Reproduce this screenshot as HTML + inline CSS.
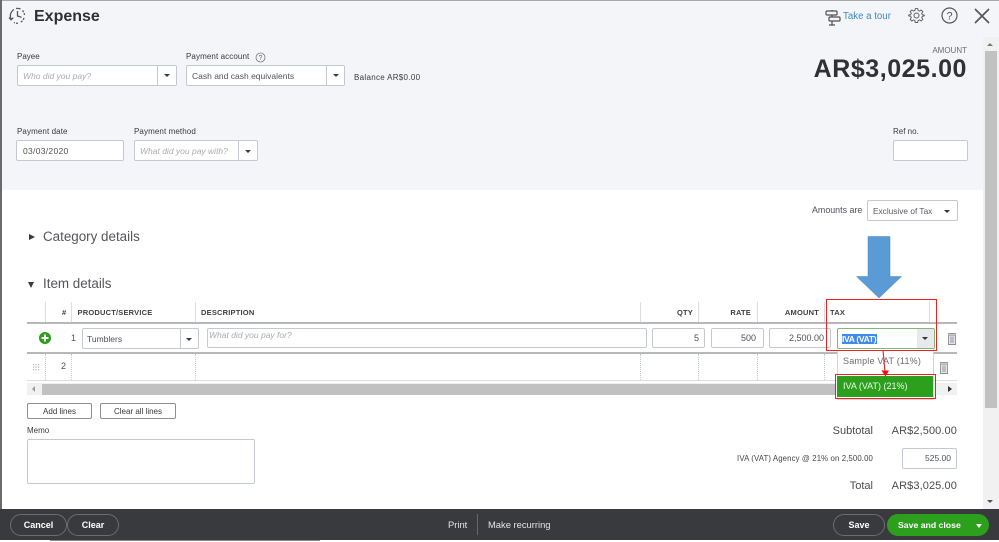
<!DOCTYPE html>
<html><head><meta charset="utf-8"><style>
html,body{margin:0;padding:0;background:#fff}
#p{position:relative;width:999px;height:542px;overflow:hidden;background:#fff;font-family:"Liberation Sans",sans-serif;color:#393a3d;filter:blur(.3px)}
#p div,#p svg{position:absolute;box-sizing:border-box}
.t{white-space:nowrap;line-height:1}
.l{font-size:8px;color:#393a3d}
.i{background:#fff;border:1px solid #c4c8d0;border-radius:2px}
.ph{font-size:8.5px;font-style:italic;color:#a9acb2}
.v{font-size:8.5px;color:#50525a}
.tri{width:0;height:0;border-left:3px solid transparent;border-right:3px solid transparent;border-top:3px solid #393a3d}
.sep{width:1px;background:#c4c8d0}
.h{font-size:7.5px;font-weight:bold;color:#3f4045;letter-spacing:.2px}
.btn{background:#fff;border:1px solid #8d9096;border-radius:2px;font-size:8px;text-align:center;color:#393a3d}
.fb{border:1px solid #6b6c72;border-radius:14px;color:#fff;font-size:9px;font-weight:bold;text-align:center;line-height:20px}
.d{width:0;border-left:1px dotted #c4c8d0}
.s{width:1px;background:#dcdde0}
</style></head><body><div id="p">
<div style="left:0;top:0;width:999px;height:190px;background:#f4f5f8"></div>
<div style="left:0;top:0;width:999px;height:1px;background:#a8a8ac"></div>
<div style="left:0;top:0;width:1.5px;height:540px;background:#6a6a6a"></div>

<svg style="left:8px;top:7px" width="19" height="18" viewBox="0 0 19 18" fill="none" stroke="#55565a" stroke-width="1.3"><path d="M3 12A7.500 7.500 0 0 1 6 2.500"/><path d="M8 1.500A7.500 7.500 0 0 1 12.500 2"/><path d="M14.500 3.500A7.500 7.500 0 0 1 16.500 8" stroke-dasharray="2 1.200"/><path d="M16 11A7.500 7.500 0 0 1 12 15.500" stroke-dasharray="2 1.200"/><path d="M10 16.200A7.500 7.500 0 0 1 6 15.500" stroke-dasharray="2 1.200"/><path d="M1 10.500l2 2.300 2.300-2"/><path d="M9.500 4v5l4 1.200"/></svg>
<div class="t" style="left:34px;top:9px;font-size:16px;font-weight:bold;color:#2f3034">Expense</div>

<div class="t l" style="left:17px;top:53px">Payee</div>
<div class="i" style="left:17px;top:65px;width:160px;height:21px"></div>
<div class="sep" style="left:157px;top:66px;height:19px"></div>
<div class="tri" style="left:164px;top:74px"></div>
<div class="t ph" style="left:23px;top:72px">Who did you pay?</div>

<div class="t l" style="left:186px;top:53px;letter-spacing:.1px">Payment account</div>
<svg style="left:255px;top:52px" width="11" height="11" viewBox="0 0 11 11" fill="none"><circle cx="5.500" cy="5.500" r="4.500" stroke="#77787c" stroke-width=".8"/><text x="5.500" y="8" font-size="7" text-anchor="middle" fill="#66676b" font-family="Liberation Sans">?</text></svg>
<div class="i" style="left:186px;top:65px;width:159px;height:21px"></div>
<div class="sep" style="left:326px;top:66px;height:19px"></div>
<div class="tri" style="left:333px;top:74px"></div>
<div class="t v" style="left:192px;top:72px">Cash and cash equivalents</div>
<div class="t l" style="left:354px;top:74px;letter-spacing:.3px">Balance AR$0.00</div>

<div class="t l" style="left:17px;top:128px;letter-spacing:.1px">Payment date</div>
<div class="i" style="left:16px;top:140px;width:108px;height:21px"></div>
<div class="t v" style="left:23px;top:147px;letter-spacing:.3px">03/03/2020</div>

<div class="t l" style="left:134px;top:128px;letter-spacing:.1px">Payment method</div>
<div class="i" style="left:134px;top:140px;width:124px;height:21px"></div>
<div class="sep" style="left:238px;top:141px;height:19px"></div>
<div class="tri" style="left:245px;top:150px"></div>
<div class="t ph" style="left:140px;top:147px">What did you pay with?</div>

<svg style="left:825px;top:9px" width="16" height="17" viewBox="0 0 16 17" fill="none" stroke="#4d4e53" stroke-width="1.200"><rect x="1" y="2" width="11" height="4" rx="1"/><rect x="4" y="8" width="11" height="4" rx="1"/><path d="M7 1v1M7 6v2M7 12v4M4 16h6"/></svg>
<div class="t" style="left:843px;top:12px;font-size:9.700px;color:#3b8ac4">Take a tour</div>
<svg style="left:908px;top:7px" width="17" height="17" viewBox="0 0 17 17" fill="none" stroke="#5b5c60" stroke-width="1"><circle cx="8.500" cy="8.500" r="2.500"/><path d="M7.200 1h2.600l.4 2.100 1.500.7 1.800-1.200 1.800 1.800-1.200 1.800.7 1.500 2.100.4v0.800l-2.100.4-.7 1.500 1.200 1.800-1.800 1.800-1.800-1.200-1.500.7-.4 2.100H7.200l-.4-2.100-1.500-.7-1.800 1.200-1.800-1.800 1.200-1.800-.7-1.500-2.100-.4V8l2.100-.4.700-1.500-1.200-1.800 1.800-1.800 1.800 1.200 1.500-.7z" transform="translate(.6 .6) scale(.93)"/></svg>
<svg style="left:941px;top:7px" width="17" height="17" viewBox="0 0 17 17" fill="none"><circle cx="8.500" cy="8.500" r="7.500" stroke="#55565a" stroke-width="1.200"/><text x="8.500" y="12.500" font-size="11" text-anchor="middle" fill="#55565a" font-family="Liberation Sans">?</text></svg>
<svg style="left:974px;top:8px" width="16" height="16" viewBox="0 0 16 16" fill="none" stroke="#55565a" stroke-width="1.700"><path d="M1 1l14 14M15 1L1 15"/></svg>

<div class="t" style="right:32px;top:47px;font-size:8px;color:#6b6c72">AMOUNT</div>
<div class="t" style="right:32px;top:57px;font-size:25px;font-weight:bold;color:#303135;letter-spacing:.55px">AR$3,025.00</div>
<div class="t l" style="left:893px;top:128px">Ref no.</div>
<div class="i" style="left:893px;top:140px;width:75px;height:21px"></div>

<div style="left:983px;top:37px;width:16px;height:472px;background:#f1f1f1"></div>
<div style="left:985px;top:51px;width:12px;height:357px;background:#c1c1c1"></div>
<div style="left:987px;top:43px;width:0;height:0;border-left:3px solid transparent;border-right:3px solid transparent;border-bottom:3px solid #777"></div>
<div style="left:987px;top:500px;width:0;height:0;border-left:3px solid transparent;border-right:3px solid transparent;border-top:3px solid #505050"></div>

<div class="t" style="left:812px;top:206px;font-size:8.900px;color:#50525a">Amounts are</div>
<div class="i" style="left:867px;top:200px;width:91px;height:21px"></div>
<div class="t" style="left:873px;top:207px;font-size:8.300px;color:#5a5b60">Exclusive of Tax</div>
<div class="tri" style="left:944px;top:210px;border-top-color:#333"></div>

<div style="left:29px;top:234px;width:0;height:0;border-top:3px solid transparent;border-bottom:3px solid transparent;border-left:6px solid #393a3d"></div>
<div class="t" style="left:43px;top:230px;font-size:13.400px;color:#55565b">Category details</div>
<div style="left:28px;top:282px;width:0;height:0;border-left:3.500px solid transparent;border-right:3.500px solid transparent;border-top:6px solid #393a3d"></div>
<div class="t" style="left:43px;top:277px;font-size:13.400px;color:#55565b">Item details</div>

<div class="s" style="left:45px;top:302px;height:20px"></div>
<div class="s" style="left:71px;top:302px;height:20px"></div>
<div class="s" style="left:195px;top:302px;height:20px"></div>
<div class="s" style="left:640px;top:302px;height:20px"></div>
<div class="s" style="left:698px;top:302px;height:20px"></div>
<div class="s" style="left:757px;top:302px;height:20px"></div>
<div class="s" style="left:824px;top:302px;height:20px"></div>
<div class="s" style="left:929px;top:302px;height:20px"></div>
<div class="d" style="left:45px;top:354px;height:26px"></div>
<div class="d" style="left:71px;top:354px;height:26px"></div>
<div class="d" style="left:195px;top:354px;height:26px"></div>
<div class="d" style="left:640px;top:354px;height:26px"></div>
<div class="d" style="left:698px;top:354px;height:26px"></div>
<div class="d" style="left:757px;top:354px;height:26px"></div>
<div class="d" style="left:824px;top:354px;height:26px"></div>

<div class="t h" style="left:62px;top:309px">#</div>
<div class="t h" style="left:77.500px;top:309px">PRODUCT/SERVICE</div>
<div class="t h" style="left:201px;top:309px">DESCRIPTION</div>
<div class="t h" style="right:306px;top:309px">QTY</div>
<div class="t h" style="right:248px;top:309px">RATE</div>
<div class="t h" style="right:180px;top:309px">AMOUNT</div>
<div class="t h" style="left:830px;top:309px">TAX</div>

<div style="left:27px;top:322px;width:930px;height:2px;background:#b5b7bb"></div>
<div style="left:27px;top:352px;width:930px;height:2px;background:#b5b7bb"></div>
<div style="left:27px;top:380px;width:930px;height:1px;background:#dcdde0"></div>

<svg style="left:38px;top:331px" width="14" height="14" viewBox="0 0 14 14"><circle cx="7" cy="7" r="6" fill="#2ca01c"/><path d="M7 3.500v7M3.500 7h7" stroke="#fff" stroke-width="2"/></svg>
<div class="t v" style="left:71px;top:334px;font-size:9px">1</div>
<div class="i" style="left:82px;top:328px;width:117px;height:21px"></div>
<div class="sep" style="left:180px;top:329px;height:19px"></div>
<div class="tri" style="left:186px;top:338px"></div>
<div class="t v" style="left:87px;top:335px">Tumblers</div>
<div class="i" style="left:207px;top:328px;width:440px;height:20px"></div>
<div class="t ph" style="left:209px;top:331px">What did you pay for?</div>
<div class="i" style="left:652px;top:328px;width:53px;height:20px"></div>
<div class="t v" style="right:300px;top:334px;font-size:9px">5</div>
<div class="i" style="left:711px;top:328px;width:53px;height:20px"></div>
<div class="t v" style="right:243px;top:334px;font-size:9px">500</div>
<div class="i" style="left:769px;top:328px;width:62px;height:20px"></div>
<div class="t v" style="right:175px;top:334px;font-size:9px">2,500.00</div>

<div class="i" style="left:837px;top:328px;width:98px;height:21px;border-color:#7dbb74"></div>
<div style="left:917px;top:329px;width:17px;height:19px;background:#e8e9ec"></div>
<div class="tri" style="left:922px;top:337px;border-top-color:#333"></div>
<div style="left:842px;top:334px;width:35px;height:10px;background:#3f8af0"></div>
<div class="t" style="left:842px;top:335px;font-size:8.500px;color:#fff;font-weight:bold;letter-spacing:-.3px">IVA (VAT)</div>

<svg style="left:947px;top:332px" width="10" height="13" viewBox="0 0 10 13" fill="none" stroke="#8a8b90" stroke-width=".9"><path d="M1 1.500h8"/><path d="M1.500 3h7v9.500h-7z" fill="#e6e7e9"/><path d="M4 4.500v6.500M6 4.500v6.500"/></svg>
<svg style="left:939px;top:361px" width="10" height="13" viewBox="0 0 10 13" fill="none" stroke="#8a8b90" stroke-width=".9"><path d="M1 1.500h8"/><path d="M1.500 3h7v9.500h-7z" fill="#e6e7e9"/><path d="M4 4.500v6.500M6 4.500v6.500"/></svg>

<svg style="left:32px;top:363px" width="8" height="8" viewBox="0 0 8 8" fill="#b5b6ba"><path d="M1 1h1.200v1.200H1zM3.500 1h1.200v1.200H3.500zM6 1h1.200v1.200H6zM1 3.500h1.200v1.200H1zM3.500 3.500h1.200v1.200H3.500zM6 3.500h1.200v1.200H6zM1 6h1.200v1.200H1zM3.500 6h1.200v1.200H3.500zM6 6h1.200v1.200H6z"/></svg>
<div class="t v" style="left:61px;top:362px;font-size:9px">2</div>

<div style="left:27px;top:383px;width:930px;height:12px;background:#f1f1f1"></div>
<div style="left:42px;top:384px;width:793px;height:11px;background:#c1c1c1"></div>
<div style="left:32px;top:386px;width:0;height:0;border-top:3px solid transparent;border-bottom:3px solid transparent;border-right:3px solid #9a9a9a"></div>
<div style="left:948px;top:386px;width:0;height:0;border-top:3px solid transparent;border-bottom:3px solid transparent;border-left:4px solid #333"></div>

<div style="left:837px;top:349px;width:97px;height:51px;background:#fff;border:1px solid #d4d5d8;border-top:none"></div>
<div class="t" style="left:843px;top:357px;font-size:9px;color:#6b6c72;letter-spacing:.2px">Sample VAT (11%)</div>
<div style="left:837px;top:376px;width:96px;height:21px;background:#2ca01c"></div>
<div class="t" style="left:843px;top:382px;font-size:9px;color:#eef8ec">IVA (VAT) (21%)</div>
<div style="left:835px;top:374px;width:101px;height:25px;border:1px solid #f02020"></div>
<div style="left:826px;top:299px;width:111px;height:52px;border:1px solid #f02020"></div>
<svg style="left:878px;top:350px" width="14" height="28" viewBox="0 0 14 28"><path d="M5 0l2 22" stroke="#e03030" stroke-width="1.200"/><path d="M3.500 20.500h7.500l-3.500 6z" fill="#f01010"/></svg>

<svg style="left:855px;top:236px" width="48" height="63" viewBox="0 0 48 63"><path d="M13 .5h22v40h11.500L24 62 1.500 40.500H13z" fill="#5b9bd5" stroke="#4a86bb" stroke-width=".5"/></svg>

<div class="btn" style="left:27px;top:403px;width:65px;height:16px;line-height:15px">Add lines</div>
<div class="btn" style="left:100px;top:403px;width:76px;height:16px;line-height:15px">Clear all lines</div>

<div class="t l" style="left:27px;top:427px">Memo</div>
<div class="i" style="left:27px;top:439px;width:228px;height:45px"></div>

<div class="t" style="right:126px;top:426px;font-size:11px;color:#4a4b50">Subtotal</div>
<div class="t" style="right:42px;top:426px;font-size:11px;color:#4a4b50;letter-spacing:.1px">AR$2,500.00</div>
<div class="t" style="right:126px;top:455px;font-size:7.800px;color:#45464b;letter-spacing:.12px">IVA (VAT) Agency @ 21% on 2,500.00</div>
<div class="i" style="left:902px;top:448px;width:55px;height:21px"></div>
<div class="t v" style="right:48px;top:454px;font-size:8.500px">525.00</div>
<div class="t" style="right:126px;top:481px;font-size:11px;color:#4a4b50">Total</div>
<div class="t" style="right:42px;top:481px;font-size:11px;color:#4a4b50;letter-spacing:.1px">AR$3,025.00</div>

<div style="left:0;top:509px;width:999px;height:31px;background:#393a3d"></div>
<div style="left:50px;top:540px;width:270px;height:1px;background:#8a8a8a"></div>
<div class="fb" style="left:10px;top:514px;width:57px;height:22px">Cancel</div>
<div class="fb" style="left:67px;top:514px;width:52px;height:22px">Clear</div>
<div class="t" style="left:448px;top:520px;font-size:9.400px;color:#e4e4e6">Print</div>
<div style="left:477px;top:514px;width:1px;height:21px;background:#66676b"></div>
<div class="t" style="left:488px;top:520px;font-size:9.400px;color:#e4e4e6">Make recurring</div>
<div class="fb" style="left:833px;top:514px;width:52px;height:22px">Save</div>
<div class="fb" style="left:887px;top:514px;width:102px;height:22px;background:#2ca01c;border-color:#2ca01c;text-align:left;padding-left:10px;font-size:8.700px">Save and close</div>
<div style="left:976px;top:524px;width:0;height:0;border-left:3px solid transparent;border-right:3px solid transparent;border-top:4px solid #fff"></div>
</div></body></html>
